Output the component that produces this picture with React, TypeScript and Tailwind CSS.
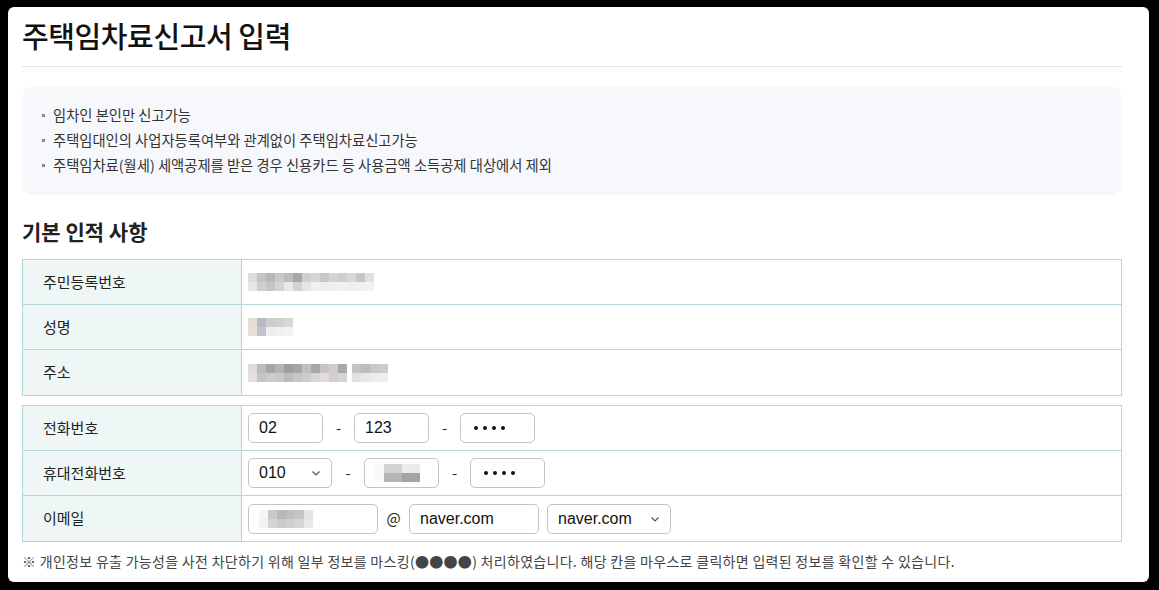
const NOTES = [
  '임차인 본인만 신고가능',
  '주택임대인의 사업자등록여부와 관계없이 주택임차료신고가능',
  '주택임차료(월세) 세액공제를 받은 경우 신용카드 등 사용금액 소득공제 대상에서 제외',
]

// pixelated "masked" value, two rows of grey cells
function Blur({ top, bottom }: { top: string[]; bottom: string[] }) {
  return (
    <div className="flex flex-col">
      <div className="flex">
        {top.map((c, i) => (
          <span key={i} className="w-[9px] h-[9px]" style={{ background: c }} />
        ))}
      </div>
      <div className="flex">
        {bottom.map((c, i) => (
          <span key={i} className="w-[9px] h-[9px]" style={{ background: c }} />
        ))}
      </div>
    </div>
  )
}

function Chevron() {
  return (
    <svg width="10" height="6" viewBox="0 0 10 6" className="text-[#555]">
      <path d="M1.5 1.5l3.5 3.5 3.5-3.5" fill="none" stroke="currentColor" strokeWidth="1.2" />
    </svg>
  )
}

function Box({ w, children }: { w: string; children?: React.ReactNode }) {
  return (
    <div
      className={`${w} h-[30px] border border-[#c4c4c4] rounded-[5px] bg-white flex items-center px-[10px] text-[16px] text-[#111]`}
      style={{ fontFamily: '"Liberation Sans", Arial, sans-serif' }}
    >
      {children}
    </div>
  )
}

function Dash({ w = 'w-[31px]' }: { w?: string }) {
  return <span className={`${w} text-center text-[15px] text-[#222]`}>-</span>
}

function Dots() {
  return (
    <span className="flex gap-[5px] pl-[3px]">
      {[0, 1, 2, 3].map(i => (
        <span key={i} className="w-[4px] h-[4px] rounded-full bg-[#111]" />
      ))}
    </span>
  )
}

function Row({ label, children, last }: { label: string; children: React.ReactNode; last?: boolean }) {
  return (
    <div className={`flex h-[45px] ${last ? '' : 'border-b border-[#b3d5d9]'}`}>
      <div className="w-[219px] shrink-0 bg-[#eef7f6] border-r border-[#b3d5d9] flex items-center pl-[20px] text-[15px] text-[#222]">
        {label}
      </div>
      <div className="flex-1 flex items-center pl-[6px]">{children}</div>
    </div>
  )
}

const G = ['#dcdcdc', '#c4c4c4', '#b8b8b8', '#c9c9c9', '#bdbdbd', '#a9a9a9', '#cfcfcf', '#d6d6d6', '#c8c8c8', '#d3d3d3', '#cecece', '#d9d9d9', '#c7c7c7', '#e0e0e0']
const L = ['#e6e6e6', '#cfcfcf', '#c6c6c6', '#d4d4d4', '#e8e8e8', '#d2d2d2', '#e4e4e4', '#f0f0f0', '#eeeeee', '#efefef', '#f1f1f1', '#eeeeee', '#f0f0f0', '#f2f2f2']

export default function App() {
  return (
    <div className="w-[1159px] h-[590px] bg-black pt-[7px] pl-[8px] pr-[10px] pb-[8px]" style={{ fontFamily: '"Noto Sans CJK KR", "Liberation Sans", sans-serif' }}>
      <div className="h-full bg-white rounded-[6px] pl-[14px] pr-[27px] pt-[9px]">
        <h1 className="text-[29px] leading-[38px] font-medium text-[#111] tracking-[-0.4px]">주택임차료신고서 입력</h1>
        <div className="mt-[12px] h-px bg-[#e6e3ec]" />

        {/* notices */}
        <div className="mt-[20px] h-[108px] bg-[#f7f8fc] rounded-[10px] pl-[20px] pt-[17px]">
          <ul className="flex flex-col gap-[3px]">
            {NOTES.map(n => (
              <li key={n} className="flex items-center h-[22px] text-[14.3px] text-[#333]">
                <span className="w-[3px] h-[3px] bg-[#888] mr-[8px]" />
                {n}
              </li>
            ))}
          </ul>
        </div>

        <h2 className="mt-[21px] text-[21px] leading-[30px] font-bold text-[#222]">기본 인적 사항</h2>

        {/* basic info */}
        <div className="mt-[13px] border border-[#b3d5d9]">
          <Row label="주민등록번호">
            <Blur top={G.slice(0, 14)} bottom={L.slice(0, 14)} />
          </Row>
          <Row label="성명">
            <Blur top={['#e4dcd8', '#b8bcc2', '#cfcbcb', '#d2cfcf', '#d7d7d7']} bottom={['#e8e0dc', '#c0c4ca', '#eeeeee', '#f0f0f0', '#f2f2f2']} />
          </Row>
          <Row label="주소" last>
            <div className="flex gap-[5px]">
              <Blur top={['#dcdcdc', '#bcbcbc', '#a6a6a6', '#b4b4b4', '#9d9d9d', '#aaa5a3', '#c0c0c0', '#a7a7a7', '#c4c4c4', '#d4ccc4', '#a8a8ae']} bottom={['#e6e0dc', '#c4c4c4', '#d0ccc8', '#c8c8c8', '#bcbcbc', '#c6c6c6', '#cccccc', '#d6d6d6', '#e0dcdc', '#cfcfcf', '#d4d4d4']} />
              <Blur top={['#c4c4c4', '#bcbcbc', '#c8c8c8', '#cccccc']} bottom={['#e2e2e2', '#e8e8e8', '#ececec', '#eeeeee']} />
            </div>
          </Row>
        </div>

        {/* contact */}
        <div className="mt-[9px] border border-[#b3d5d9]">
          <Row label="전화번호">
            <Box w="w-[75px]">02</Box>
            <Dash />
            <Box w="w-[75px]">123</Box>
            <Dash />
            <Box w="w-[75px]"><Dots /></Box>
          </Row>
          <Row label="휴대전화번호">
            <Box w="w-[84px]">
              <span className="flex-1">010</span>
              <Chevron />
            </Box>
            <Dash w="w-[32px]" />
            <Box w="w-[75px]">
              <Blur top={['#fbfaf8', '#d2d2d2', '#d2d2d2', '#ebebeb', '#ebebeb']} bottom={['#fbfaf8', '#b4b4b4', '#b4b4b4', '#a4a4a4', '#a4a4a4']} />
            </Box>
            <Dash />
            <Box w="w-[75px]"><Dots /></Box>
          </Row>
          <Row label="이메일" last>
            <Box w="w-[130px]">
              <Blur top={['#f4f4f4', '#c8c8c8', '#b8b8b8', '#c0c0c0', '#c6c6c6', '#e4e4e4']} bottom={['#f2f2f2', '#d4d4d4', '#cccccc', '#d0d0d0', '#d6d6d6', '#e8e8e8']} />
            </Box>
            <span className="w-[31px] text-center text-[15px] text-[#222]">@</span>
            <Box w="w-[130px]">naver.com</Box>
            <div className="w-[8px]" />
            <Box w="w-[124px]">
              <span className="flex-1">naver.com</span>
              <Chevron />
            </Box>
          </Row>
        </div>

        <p className="mt-[9px] text-[14px] tracking-[0.3px] text-[#444]">
          ※ 개인정보 유출 가능성을 사전 차단하기 위해 일부 정보를 마스킹(●●●●) 처리하였습니다. 해당 칸을 마우스로 클릭하면 입력된 정보를 확인할 수 있습니다.
        </p>
      </div>
    </div>
  )
}
